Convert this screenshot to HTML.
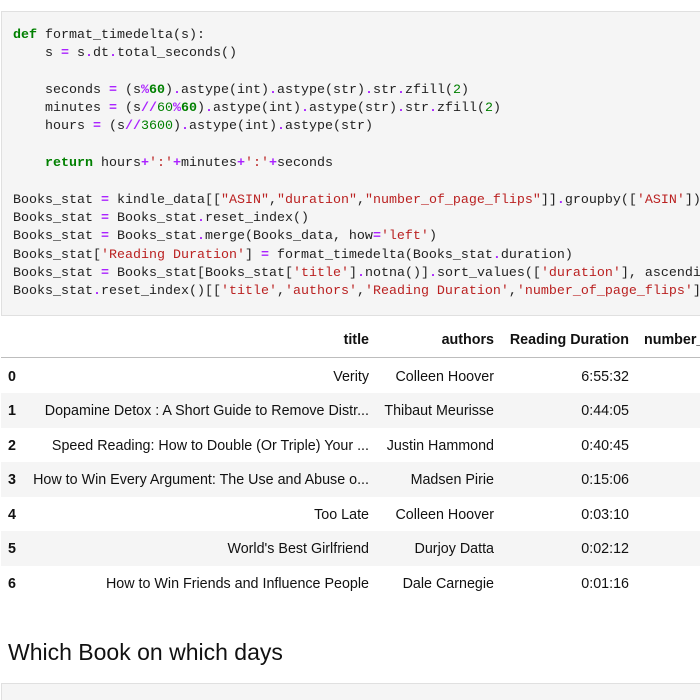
<!DOCTYPE html>
<html><head><style>
html,body{margin:0;width:700px;height:700px;overflow:hidden}
body{background:#fff;font-family:"Liberation Sans",sans-serif;color:#111}
#w{position:relative;width:700px;height:700px;overflow:hidden}
.code{position:absolute;left:1px;top:11px;width:710px;height:305px;background:#f5f5f5;border:1px solid #e0e0e0;box-sizing:border-box}
pre{margin:0;position:absolute;left:13px;top:27px;font-family:"Liberation Mono",monospace;font-size:13.33px;line-height:18.3px;color:#212121}
.k{color:#008000;font-weight:bold}.o{color:#aa22ff;font-weight:bold}.n{color:#008000}.s{color:#ba2121}
.r{position:absolute;left:1px;width:710px;height:34.5px}
.t{position:absolute;font-size:14.3px;white-space:nowrap}
.h{font-weight:bold}
</style></head><body><div id="w">
<div class="code"></div>
<pre><span class="k">def</span> format_timedelta(s):
    s <span class="o">=</span> s<span class="o">.</span>dt<span class="o">.</span>total_seconds()

    seconds <span class="o">=</span> (s<span class="o">%</span><span class="k">60</span>)<span class="o">.</span>astype(int)<span class="o">.</span>astype(str)<span class="o">.</span>str<span class="o">.</span>zfill(<span class="n">2</span>)
    minutes <span class="o">=</span> (s<span class="o">//</span><span class="n">60</span><span class="o">%</span><span class="k">60</span>)<span class="o">.</span>astype(int)<span class="o">.</span>astype(str)<span class="o">.</span>str<span class="o">.</span>zfill(<span class="n">2</span>)
    hours <span class="o">=</span> (s<span class="o">//</span><span class="n">3600</span>)<span class="o">.</span>astype(int)<span class="o">.</span>astype(str)

    <span class="k">return</span> hours<span class="o">+</span><span class="s">':'</span><span class="o">+</span>minutes<span class="o">+</span><span class="s">':'</span><span class="o">+</span>seconds

Books_stat <span class="o">=</span> kindle_data[[<span class="s">"ASIN"</span>,<span class="s">"duration"</span>,<span class="s">"number_of_page_flips"</span>]]<span class="o">.</span>groupby([<span class="s">'ASIN'</span>]).sum()
Books_stat <span class="o">=</span> Books_stat<span class="o">.</span>reset_index()
Books_stat <span class="o">=</span> Books_stat<span class="o">.</span>merge(Books_data, how<span class="o">=</span><span class="s">'left'</span>)
Books_stat[<span class="s">'Reading Duration'</span>] <span class="o">=</span> format_timedelta(Books_stat<span class="o">.</span>duration)
Books_stat <span class="o">=</span> Books_stat[Books_stat[<span class="s">'title'</span>]<span class="o">.</span>notna()]<span class="o">.</span>sort_values([<span class="s">'duration'</span>], ascending<span class="o">=</span><span class="k">False</span>)
Books_stat<span class="o">.</span>reset_index()[[<span class="s">'title'</span>,<span class="s">'authors'</span>,<span class="s">'Reading Duration'</span>,<span class="s">'number_of_page_flips'</span>]]</pre>

<div style="position:absolute;left:1px;top:357px;width:710px;height:1px;background:#bdbdbd"></div>
<div class="r" style="top:393px;background:#f5f5f5"></div>
<div class="r" style="top:462px;background:#f5f5f5"></div>
<div class="r" style="top:531px;background:#f5f5f5"></div>

<div class="t h" style="right:331px;top:332px">title</div>
<div class="t h" style="right:206px;top:332px">authors</div>
<div class="t h" style="right:71px;top:332px">Reading Duration</div>
<div class="t h" style="left:644px;top:332px">number_of_page_flips</div>

<div class="t h" style="left:8px;top:369px">0</div><div class="t" style="right:331px;top:369px">Verity</div><div class="t" style="right:206px;top:369px">Colleen Hoover</div><div class="t" style="right:71px;top:369px">6:55:32</div>
<div class="t h" style="left:8px;top:403px">1</div><div class="t" style="right:331px;top:403px">Dopamine Detox : A Short Guide to Remove Distr...</div><div class="t" style="right:206px;top:403px">Thibaut Meurisse</div><div class="t" style="right:71px;top:403px">0:44:05</div>
<div class="t h" style="left:8px;top:438px">2</div><div class="t" style="right:331px;top:438px">Speed Reading: How to Double (Or Triple) Your ...</div><div class="t" style="right:206px;top:438px">Justin Hammond</div><div class="t" style="right:71px;top:438px">0:40:45</div>
<div class="t h" style="left:8px;top:472px">3</div><div class="t" style="right:331px;top:472px">How to Win Every Argument: The Use and Abuse o...</div><div class="t" style="right:206px;top:472px">Madsen Pirie</div><div class="t" style="right:71px;top:472px">0:15:06</div>
<div class="t h" style="left:8px;top:507px">4</div><div class="t" style="right:331px;top:507px">Too Late</div><div class="t" style="right:206px;top:507px">Colleen Hoover</div><div class="t" style="right:71px;top:507px">0:03:10</div>
<div class="t h" style="left:8px;top:541px">5</div><div class="t" style="right:331px;top:541px">World's Best Girlfriend</div><div class="t" style="right:206px;top:541px">Durjoy Datta</div><div class="t" style="right:71px;top:541px">0:02:12</div>
<div class="t h" style="left:8px;top:576px">6</div><div class="t" style="right:331px;top:576px">How to Win Friends and Influence People</div><div class="t" style="right:206px;top:576px">Dale Carnegie</div><div class="t" style="right:71px;top:576px">0:01:16</div>

<div style="position:absolute;left:8px;top:639px;font-size:23px;color:#111;white-space:nowrap">Which Book on which days</div>
<div style="position:absolute;left:1px;top:683px;width:710px;height:40px;background:#f5f5f5;border:1px solid #e0e0e0;box-sizing:border-box"></div>
</div></body></html>
